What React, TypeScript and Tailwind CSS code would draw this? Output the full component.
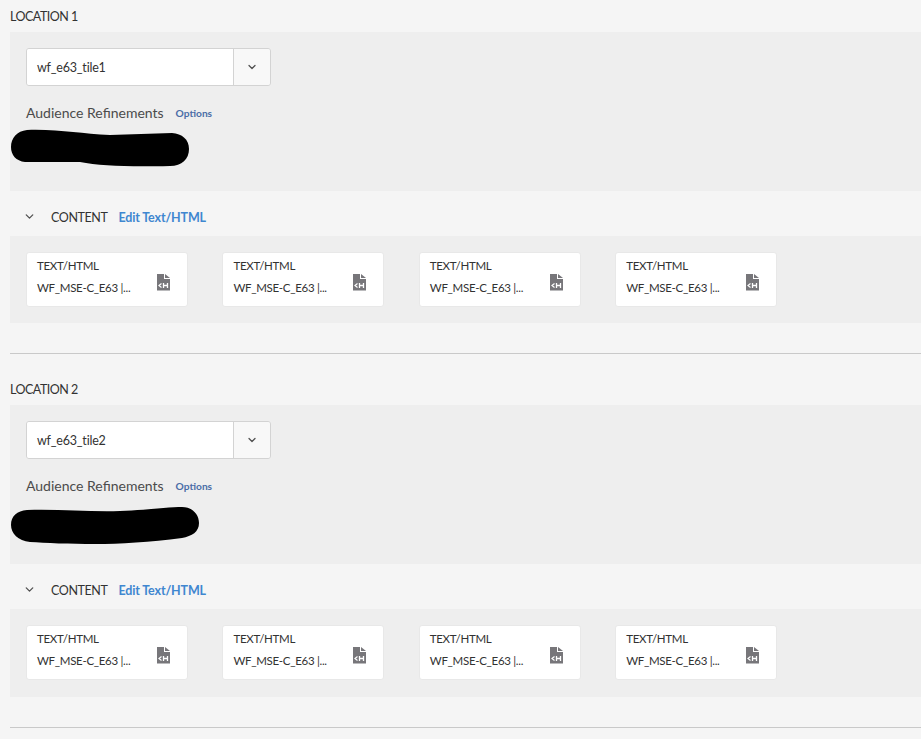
import { ChevronDown } from "lucide-react";

const FONT = "font-['Lato','Noto_Sans',sans-serif]";

function HtmlFileIcon() {
    return (
        <svg width="13" height="17" viewBox="0 0 13 17" className="shrink-0 mt-[5px]">
            <path d="M0 0H7V5H13V16.5H0Z" fill="#77767a" />
            <path d="M8 0L13 4H8Z" fill="#77767a" />
            <path d="M4.5 9.5L2 11.5L4.5 13.5" fill="none" stroke="#fff" strokeWidth="1.2" />
            <path d="M6.5 9V14M10.5 9V14M6.5 11.5H10.5" fill="none" stroke="#fff" strokeWidth="1.3" />
        </svg>
    );
}

function ContentCard() {
    return (
        <div className="w-[162px] h-[55px] bg-white rounded-[3px] border border-[#e8e8e8] pl-[10px] pr-[17px] flex items-center justify-between">
            <div className="text-[11.5px] tracking-[-0.3px] leading-[22px] text-[#323232] -mt-[6px]">
                <div>TEXT/HTML</div>
                <div>WF_MSE-C_E63 |...</div>
            </div>
            <HtmlFileIcon />
        </div>
    );
}

function Scribble({ variant }: { variant: 1 | 2 }) {
    if (variant === 1) {
        return (
            <svg width="180" height="38" viewBox="0 0 180 38" className="-ml-[16px] mt-[5px] block">
                <path d="M17 1C50 0 70 5 100 6L162 4C172 5 179 10 179 20C179 30 172 37 160 37C120 38 90 37 70 33L15 33C6 32 1 26 1 18C1 9 7 2 17 1Z" fill="#000" />
            </svg>
        );
    }
    return (
        <svg width="190" height="38" viewBox="0 0 190 38" className="-ml-[16px] mt-[10px] block">
            <path d="M17 3C50 2 80 5 110 4C135 3 160 0 172 0C183 0 189 8 189 16C189 25 182 29 172 31C140 35 110 37 85 37C60 37 35 36 20 35C8 34 1 26 1 18C1 9 7 4 17 3Z" fill="#000" />
        </svg>
    );
}

function Location({ name, tile, variant }: { name: string; tile: string; variant: 1 | 2 }) {
    return (
        <section className="border-b border-[#c9c9c9] ml-[10px] pb-[30px]">
            <h2 className="h-[32px] leading-[33px] text-[12.5px] tracking-[-0.5px] text-[#323232]">{name}</h2>

            <div className="bg-[#eeeeee] h-[159px] pt-[16px] pl-[16px]">
                <div className="flex w-[245px] h-[38px] border border-[#d3d3d3] rounded-[3px] overflow-hidden">
                    <div className="flex-1 bg-white pl-[10px] text-[12.5px] tracking-[-0.2px] leading-[38px] text-[#323232]">{tile}</div>
                    <div className="w-[37px] border-l border-[#d3d3d3] bg-[#f8f8f8] flex items-center justify-center">
                        <ChevronDown size={12} strokeWidth={2.5} className="text-[#505050]" />
                    </div>
                </div>

                <div className="flex items-center gap-[12px] mt-[16px] h-[22px] leading-[22px]">
                    <span className="text-[14px] text-[#4b4b4b]">Audience Refinements</span>
                    <span className="text-[10.2px] font-bold text-[#4a6da7]">Options</span>
                </div>

                <Scribble variant={variant} />
            </div>

            <div className="flex items-center h-[45px] pl-[13px] pt-[9px]">
                <ChevronDown size={13} strokeWidth={2.4} className="text-[#505050] -mt-[4px]" />
                <span className="ml-[15px] text-[12.5px] tracking-[-0.4px] text-[#323232]">CONTENT</span>
                <span className="ml-[11px] text-[12.5px] tracking-[-0.15px] font-bold text-[#3f87d0]">Edit Text/HTML</span>
            </div>

            <div className={`bg-[#eeeeee] pt-[16px] pl-[16px] flex gap-[34.4px] ${variant === 2 ? "h-[88px]" : "h-[87px]"}`}>
                <ContentCard />
                <ContentCard />
                <ContentCard />
                <ContentCard />
            </div>
        </section>
    );
}

export default function App() {
    return (
        <div className={`${FONT} w-[921px] h-[739px] overflow-hidden bg-[#f5f5f5] flex flex-col gap-[19px]`}>
            <Location name="LOCATION 1" tile="wf_e63_tile1" variant={1} />
            <Location name="LOCATION 2" tile="wf_e63_tile2" variant={2} />
        </div>
    );
}
